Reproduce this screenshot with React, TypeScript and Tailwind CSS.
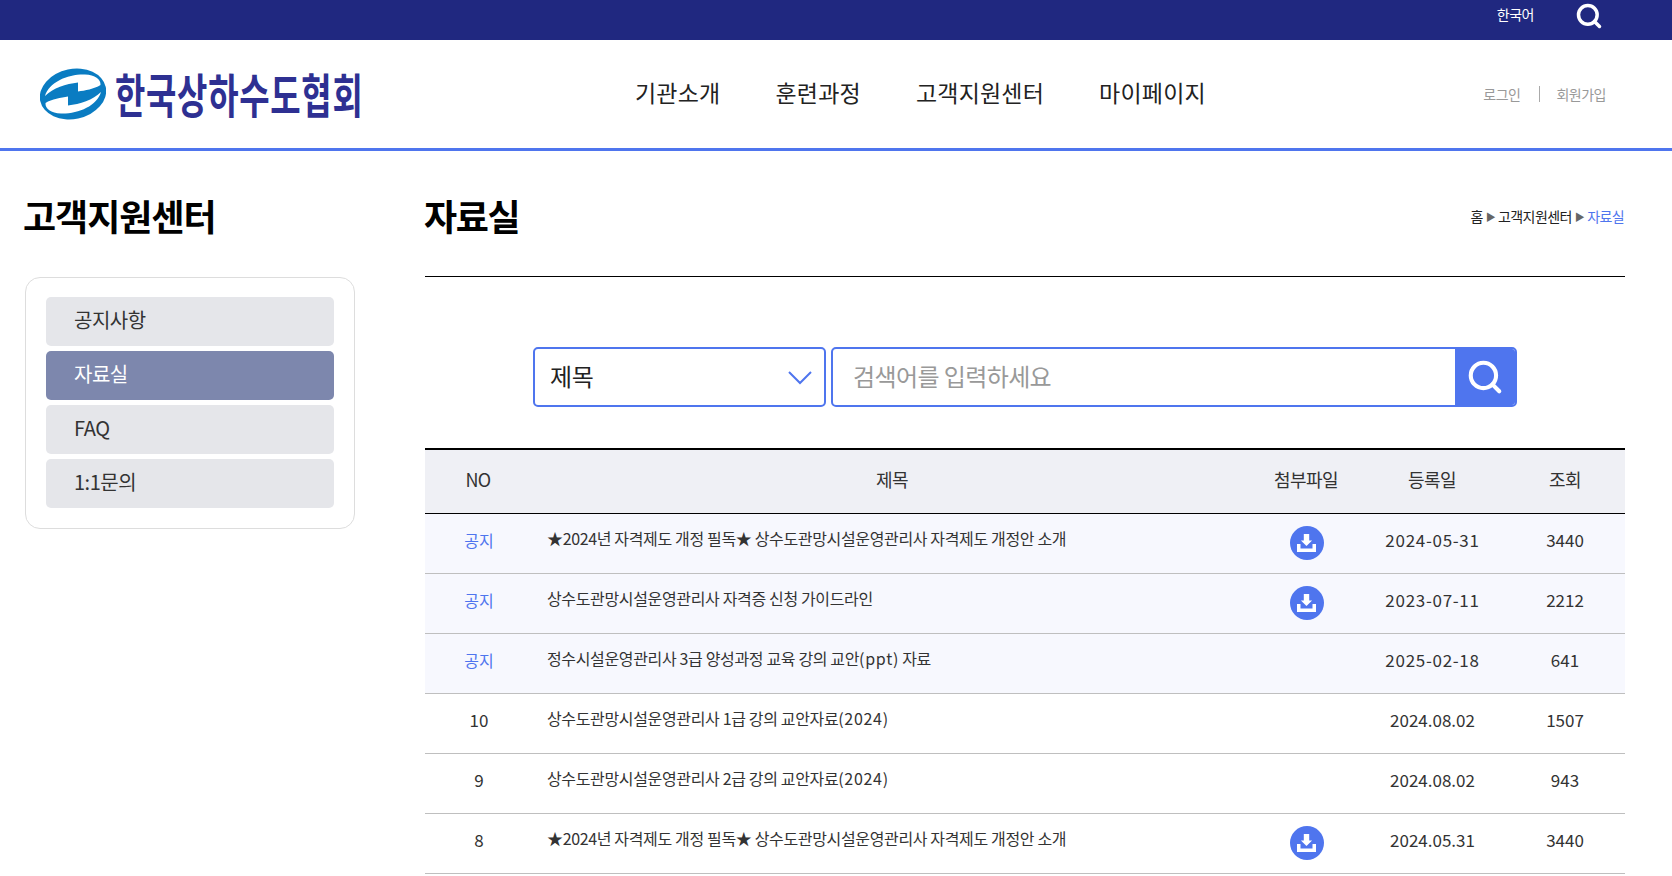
import { Search } from 'lucide-react';

const sideItems = ['공지사항', '자료실', 'FAQ', '1:1문의'];
const navItems = ['기관소개', '훈련과정', '고객지원센터', '마이페이지'];

const GUIDE = '★2024년 자격제도 개정 필독★ 상수도관망시설운영관리사 자격제도 개정안 소개';

const rows = [
  { no: '공지', title: GUIDE, file: true, date: '2024-05-31', views: '3440' },
  { no: '공지', title: '상수도관망시설운영관리사 자격증 신청 가이드라인', file: true, date: '2023-07-11', views: '2212' },
  { no: '공지', title: '정수시설운영관리사 3급 양성과정 교육 강의 교안(ppt) 자료', file: false, date: '2025-02-18', views: '641' },
  { no: '10', title: '상수도관망시설운영관리사 1급 강의 교안자료(2024)', file: false, date: '2024.08.02', views: '1507' },
  { no: '9', title: '상수도관망시설운영관리사 2급 강의 교안자료(2024)', file: false, date: '2024.08.02', views: '943' },
  { no: '8', title: GUIDE, file: true, date: '2024.05.31', views: '3440' },
];

function Logo() {
  return (
    <div className="w-[595px] shrink-0 flex items-center h-[54px]">
      <svg width="66" height="54" viewBox="0 0 66 54" className="shrink-0">
        <ellipse cx="33" cy="27" rx="33.5" ry="25" transform="rotate(-12 33 27)" fill="#0a7cc2" />
        <path
          d="M5 29C9 15 28 7 45 7.500C55 8 61 12 60.500 18C54 22 45 23.500 38 24.500L38 15.500C26 17 13 21 5 29Z"
          fill="#fff"
        />
        <path
          d="M61 25C57 39 38 47 21 46.500C11 46 5 42 5.500 36C12 32 21 30.500 28 29.500L28 38.500C40 37 53 33 61 25Z"
          fill="#fff"
        />
      </svg>
      <span className="ml-[9px] text-[33px] leading-none font-bold text-[#2e3092] tracking-[0.7px] scale-y-[1.4] whitespace-nowrap">
        한국상하수도협회
      </span>
    </div>
  );
}

function DownloadBadge() {
  return (
    <span className="-mt-0.5 ml-px inline-flex items-center justify-center w-[34px] h-[34px] rounded-full bg-[#4f75ee]">
      <svg width="19" height="18" viewBox="0 0 19 18" fill="#fff">
        <path d="M6.800 0h5.400v6.500h2.900L9.500 12 3.900 6.500h2.900z" />
        <path d="M0 10h3.500v4.500h12V10H19v8H0z" />
      </svg>
    </span>
  );
}

function Row({ row }: { row: (typeof rows)[number] }) {
  const notice = row.no === '공지';
  // 괄호 부분은 원본에서 자간이 더 넓다
  const parts = row.title.split(/(\(.*?\))/);
  return (
    <div
      className={`grid grid-cols-[106px_722px_106px_146px_120px] h-[60px] items-center border-b border-[#bfbfbf] text-[#333] ${
        notice ? 'bg-[#f7f8fe]' : 'bg-white'
      }`}
    >
      <div className={`text-center pl-0.5 -mt-[7px] ${notice ? 'text-[16px] text-[#4f75ee]' : 'text-[17px]'}`}>{row.no}</div>
      <div className="pl-4 -mt-3 text-[16px] tracking-[-0.35px] whitespace-nowrap">
        {parts.map((part, i) =>
          i % 2 === 1 ? (
            <span key={i} className="tracking-[0.7px]">
              {part}
            </span>
          ) : (
            part
          )
        )}
      </div>
      <div className="flex justify-center">{row.file && <DownloadBadge />}</div>
      <div className={`text-center pl-px -mt-[7px] text-[17px] ${row.date.includes('-') ? 'tracking-[0.7px]' : ''}`}>{row.date}</div>
      <div className="text-center -mt-[7px] text-[17px]">{row.views}</div>
    </div>
  );
}

export default function App() {
  return (
    <div className="h-[876px] overflow-hidden bg-white font-['Noto_Sans_CJK_KR','Noto_Sans',sans-serif] text-[#222]">
      <div className="h-10 bg-[#202880] flex items-center justify-end pr-[69px]">
        <span className="text-[14px] text-white mr-[41px] -mt-3 tracking-[-0.5px]">한국어</span>
        <Search size={28} strokeWidth={3} className="text-white -mt-2" />
      </div>

      <header className="h-[111px] border-b-[3px] border-[#4f75ee] flex items-center pl-[40px] pr-[66px]">
        <Logo />
        <nav className="-mt-[4px] flex gap-[55px] text-[23px] tracking-[0.2px] text-[#222]">
          {navItems.map((item) => (
            <span key={item}>{item}</span>
          ))}
        </nav>
        <div className="ml-auto flex items-center text-[14px] text-[#999] tracking-[-0.5px]">
          <span>로그인</span>
          <span className="ml-[19px] mr-[16px] w-px h-4 bg-[#aaa]" />
          <span>회원가입</span>
        </div>
      </header>

      <div className="flex pl-[25px] pt-[31px]">
        <aside className="w-[330px] shrink-0">
          <h2 className="-ml-0.5 -mt-px h-[68px] text-[36px] leading-[68px] font-bold text-black tracking-[-1px]">고객지원센터</h2>
          <div className="mt-[28px] border border-[#ddd] rounded-[15px] px-5 pt-[19px] pb-5 flex flex-col gap-[5px]">
            {sideItems.map((item) => (
              <div
                key={item}
                className={`h-[49px] rounded-[5px] pl-7 text-[20px] leading-[45px] tracking-[-0.5px] ${
                  item === '자료실' ? 'bg-[#7d87ad] text-white' : 'bg-[#e5e6ea] text-[#333]'
                }`}
              >
                {item}
              </div>
            ))}
          </div>
        </aside>

        <main className="ml-[70px] w-[1200px]">
          <div className="h-[95px] border-b border-black flex justify-between pb-[27px] items-center">
            <h1 className="-mt-[2px] -ml-px text-[36px] font-bold text-black tracking-[-1.4px]">자료실</h1>
            <div className="mt-[2px] mr-px text-[14px] tracking-[-0.6px] text-[#222] flex items-center gap-[3px]">
              <span>홈</span>
              <span className="text-[10px] text-[#666]">▶</span>
              <span>고객지원센터</span>
              <span className="text-[10px] text-[#666]">▶</span>
              <span className="text-[#4f75ee]">자료실</span>
            </div>
          </div>

          <div className="mt-[70px] ml-[108px] flex gap-[5px] h-[60px]">
            <div className="w-[293px] border-2 border-[#4f75ee] rounded-[5px] flex items-center justify-between pl-[15px] pr-[12px] text-[24px] text-[#222]">
              <span className="-mt-0.5 tracking-[-0.4px]">제목</span>
              <svg width="24" height="14" viewBox="0 0 24 14" fill="none" stroke="#4f75ee" strokeWidth="2" className="mt-0.5">
                <path d="M1 1l11 11L23 1" />
              </svg>
            </div>
            <div className="w-[686px] border-2 border-[#4f75ee] rounded-[5px] flex items-center overflow-hidden">
              <span className="flex-1 pl-[20px] -mt-0.5 text-[24px] text-[#999] tracking-[-0.6px]">검색어를 입력하세요</span>
              <span className="w-[60px] h-full bg-[#4f75ee] flex items-center justify-center">
                <Search size={38} strokeWidth={2.6} className="text-white" />
              </span>
            </div>
          </div>

          <div className="mt-[41px] border-t-2 border-black">
            <div className="grid grid-cols-[106px_722px_106px_146px_120px] h-[64px] items-center bg-[#eff0f5] border-b border-black text-[18px] text-[#333] text-center tracking-[-0.6px]">
              <div className="-mt-[5px]">NO</div>
              <div className="-mt-[5px]">제목</div>
              <div className="-mt-[5px]">첨부파일</div>
              <div className="-mt-[5px]">등록일</div>
              <div className="-mt-[5px]">조회</div>
            </div>
            {rows.map((row, i) => (
              <Row key={i} row={row} />
            ))}
          </div>
        </main>
      </div>
    </div>
  );
}
